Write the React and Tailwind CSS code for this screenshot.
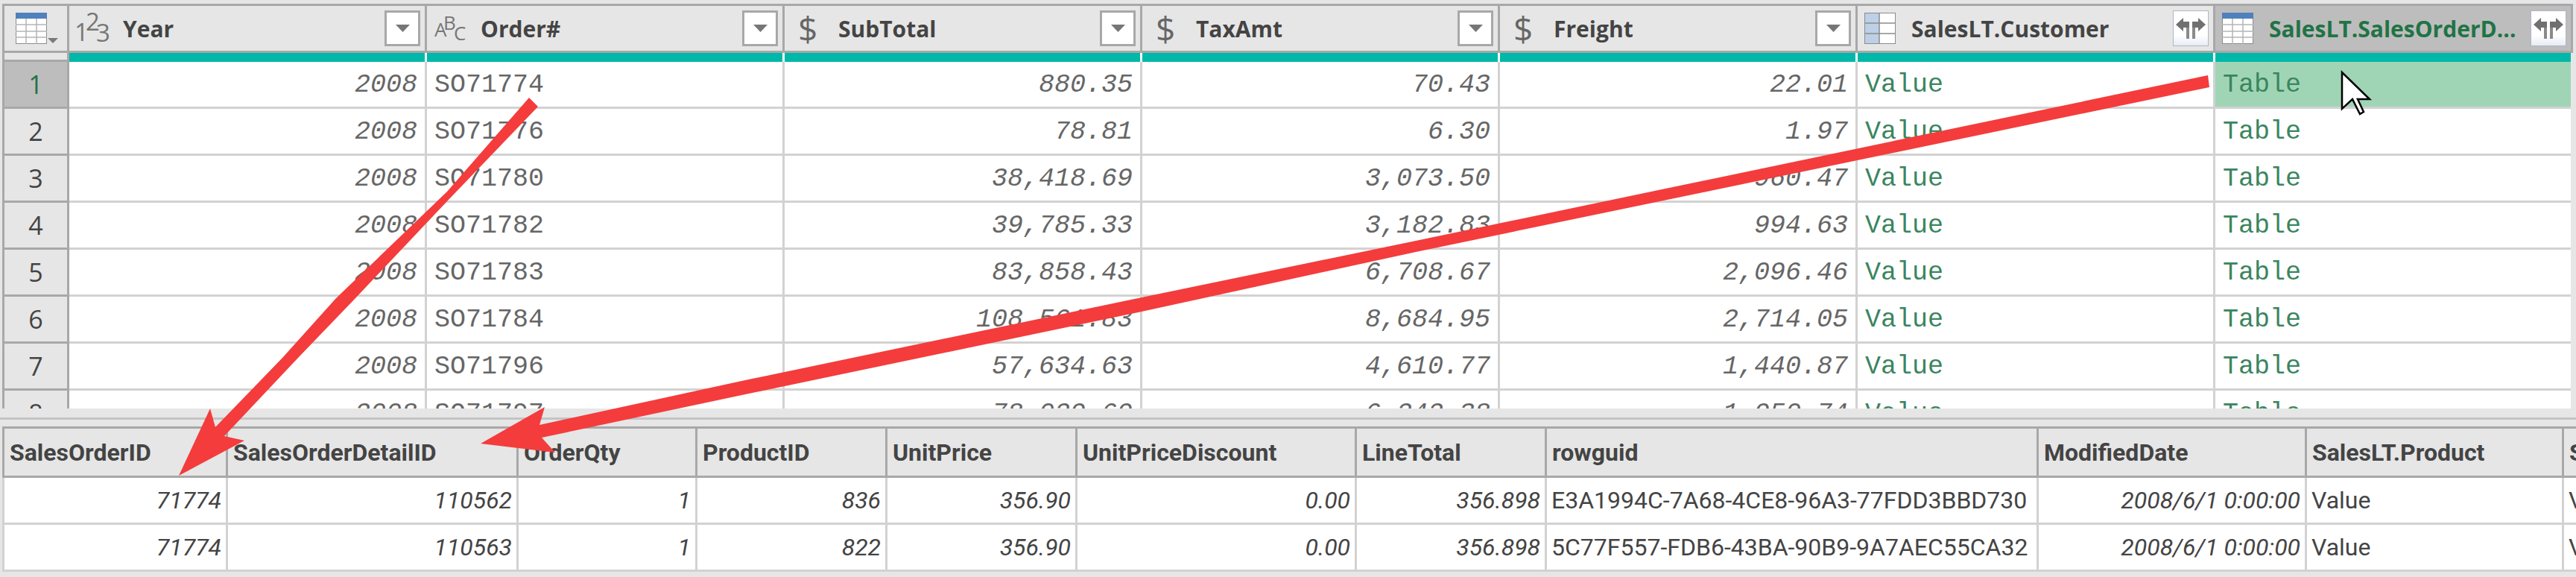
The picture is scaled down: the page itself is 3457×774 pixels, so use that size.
const rows = [
    ["2008", "SO71774", "880.35", "70.43", "22.01"],
    ["2008", "SO71776", "78.81", "6.30", "1.97"],
    ["2008", "SO71780", "38,418.69", "3,073.50", "960.47"],
    ["2008", "SO71782", "39,785.33", "3,182.83", "994.63"],
    ["2008", "SO71783", "83,858.43", "6,708.67", "2,096.46"],
    ["2008", "SO71784", "108,561.83", "8,684.95", "2,714.05"],
    ["2008", "SO71796", "57,634.63", "4,610.77", "1,440.87"],
    ["2008", "SO71797", "78,029.69", "6,242.38", "1,950.74"],
];

const detailCols = [
    { name: "SalesOrderID", w: "w-[300px]" },
    { name: "SalesOrderDetailID", w: "w-[390px]" },
    { name: "OrderQty", w: "w-[240px]" },
    { name: "ProductID", w: "w-[255px]" },
    { name: "UnitPrice", w: "w-[255px]" },
    { name: "UnitPriceDiscount", w: "w-[375px]" },
    { name: "LineTotal", w: "w-[255px]" },
    { name: "rowguid", w: "w-[660px]" },
    { name: "ModifiedDate", w: "w-[360px]" },
    { name: "SalesLT.Product", w: "w-[345px]" },
    { name: "SalesLT.SalesOrderHeader", w: "w-[200px]" },
];

const detailRows = [
    ["71774", "110562", "1", "836", "356.90", "0.00", "356.898", "E3A1994C-7A68-4CE8-96A3-77FDD3BBD730", "2008/6/1 0:00:00", "Value", "Value"],
    ["71774", "110563", "1", "822", "356.90", "0.00", "356.898", "5C77F557-FDB6-43BA-90B9-9A7AEC55CA32", "2008/6/1 0:00:00", "Value", "Value"],
];

const TableIcon = ({ firstCol }) => (
    <svg width="42" height="42" viewBox="0 0 42 42" className="shrink-0">
        <rect x="0.5" y="0.5" width="41" height="41" fill="#fff" stroke="#8c8c8c" />
        {firstCol ? (
            <rect x="1" y="1" width="19" height="40" fill="#bdd0e6" />
        ) : (
            <rect x="0" y="0" width="42" height="8" fill="#4f81bd" />
        )}
        {firstCol ? (
            <path d="M20 0V42M0 14H42M0 28H42" stroke="#8c8c8c" strokeWidth="1.5" fill="none" />
        ) : (
            <path d="M14 8V42M28 8V42M0 16H42M0 25H42M0 33H42" stroke="#b5b5b5" strokeWidth="1.5" fill="none" />
        )}
    </svg>
);

const CornerIcon = () => (
    <div className="flex items-end gap-px">
        <TableIcon />
        <svg width="14" height="7" viewBox="0 0 14 7" className="mb-[1px]">
            <path d="M0 0H14L7 7Z" fill="#7a7a7a" />
        </svg>
    </div>
);

const FilterButton = () => (
    <div className="w-12 h-12 shrink-0 border-[3px] border-[#a8a8a8] bg-white flex items-center justify-center">
        <svg width="19" height="10" viewBox="0 0 19 10">
            <path d="M0 0H19L9.5 10Z" fill="#767676" />
        </svg>
    </div>
);

const ExpandButton = () => (
    <div className="w-12 h-12 shrink-0 border border-[#aeb6c4] bg-gradient-to-b from-white from-70% to-[#e8ecf4] flex items-center justify-center">
        <svg width="40" height="28" viewBox="0 0 40 28">
            <path d="M0 9L10 0V5H18V13H10V18Z" fill="#707070" />
            <path d="M40 9L30 0V5H22V13H30V18Z" fill="#707070" />
            <path d="M14 13H18V28H14ZM22 13H26V28H22Z" fill="#8a8a8a" />
        </svg>
    </div>
);

const NumberType = () => (
    <div className="w-[50px] h-[42px] relative shrink-0 text-[#777] text-[33px] leading-none font-['Open_Sans',sans-serif]">
        <span className="absolute left-[-2px] top-[9px]">1</span>
        <span className="absolute left-[13px] top-[-5px]">2</span>
        <span className="absolute left-[27px] top-[10px]">3</span>
    </div>
);

const TextType = () => (
    <div className="w-[50px] h-[42px] relative shrink-0 text-[#777] text-[26px] leading-none font-['Open_Sans',sans-serif]">
        <span className="absolute left-[1px] top-[9px]">A</span>
        <span className="absolute left-[13px] top-0">B</span>
        <span className="absolute left-[27px] top-[14px]">C</span>
    </div>
);

const CurrencyType = () => (
    <div className="w-[50px] shrink-0 pl-[9px] text-[#666] text-[46px] leading-none font-['Open_Sans',sans-serif]">$</div>
);

const HeaderCell = ({ icon, label, button, active }) => (
    <div
        className={`w-[477px] h-full flex items-center pl-[9px] pr-[6px] ${
            active ? "bg-[#bdbdbd] text-[#217346]" : "bg-[#e6e6e6] text-[#444]"
        }`}
    >
        <div className="w-[50px] shrink-0">{icon}</div>
        <span className="ml-[13px] flex-1 text-[30px] font-bold font-['Open_Sans',sans-serif] whitespace-nowrap">
            {label}
        </span>
        {button}
    </div>
);

const BodyCell = ({ children, right, green, selected }) => (
    <div
        className={`w-[477px] h-full flex items-center px-[10px] pt-[2px] text-[35px] leading-none font-['Liberation_Mono',monospace] whitespace-nowrap ${
            right ? "justify-end italic" : ""
        } ${green ? "text-[#3b8560]" : "text-[#666]"} ${selected ? "bg-[#9fd5b5]" : "bg-white"}`}
    >
        {children}
    </div>
);

const VSep = ({ dark }) => (
    <div className={`w-[3px] h-full shrink-0 ${dark ? "bg-[#a8a8a8]" : "bg-[#d2d2d2]"}`} />
);

const QueryGrid = () => (
    <div className="h-[543px] overflow-hidden pl-[3px] shrink-0">
        {/* Encabezados */}
        <div className="w-[3450px] flex h-[66px] border-y-[3px] border-[#a8a8a8] border-x-[3px] box-border">
            <div className="w-[84px] h-full bg-[#e6e6e6] flex items-center pl-[15px]">
                <CornerIcon />
            </div>
            <VSep dark />
            <HeaderCell icon={<NumberType />} label="Year" button={<FilterButton />} />
            <VSep dark />
            <HeaderCell icon={<TextType />} label="Order#" button={<FilterButton />} />
            <VSep dark />
            <HeaderCell icon={<CurrencyType />} label="SubTotal" button={<FilterButton />} />
            <VSep dark />
            <HeaderCell icon={<CurrencyType />} label="TaxAmt" button={<FilterButton />} />
            <VSep dark />
            <HeaderCell icon={<CurrencyType />} label="Freight" button={<FilterButton />} />
            <VSep dark />
            <HeaderCell icon={<TableIcon firstCol />} label="SalesLT.Customer" button={<ExpandButton />} />
            <VSep dark />
            <HeaderCell icon={<TableIcon />} label="SalesLT.SalesOrderD..." button={<ExpandButton />} active />
        </div>

        {/* Barra de calidad de columnas */}
        <div className="flex h-[12px] w-[3447px]">
            <div className="w-[3px] bg-[#a8a8a8]" />
            <div className="w-[84px] h-full flex flex-col bg-[#e6e6e6]">
                <div className="h-[9px]" />
                <div className="h-[3px] bg-[#a8a8a8]" />
            </div>
            <VSep dark />
            {[0, 1, 2, 3, 4, 5, 6].map((i) => (
                <div key={i} className="flex h-full">
                    {i > 0 && <div className="w-[3px] bg-white" />}
                    <div className="w-[477px] bg-[#00b8aa]" />
                </div>
            ))}
        </div>

        {rows.map((row, i) => (
            <div key={i} className="flex h-[63px] w-[3447px] bg-[#d2d2d2]">
                <div className="w-[3px] bg-[#a8a8a8]" />
                <div className="w-[84px] h-full flex flex-col">
                    <div
                        className={`h-[60px] flex items-center justify-center text-[34px] font-['Open_Sans',sans-serif] ${
                            i === 0 ? "bg-[#bdbdbd] text-[#217346]" : "bg-[#e6e6e6] text-[#444]"
                        }`}
                    >
                        {i + 1}
                    </div>
                    <div className="h-[3px] bg-[#a8a8a8]" />
                </div>
                <VSep dark />
                <div className="flex flex-col">
                    <div className="flex h-[60px]">
                        <BodyCell right>{row[0]}</BodyCell>
                        <VSep />
                        <BodyCell>{row[1]}</BodyCell>
                        <VSep />
                        <BodyCell right>{row[2]}</BodyCell>
                        <VSep />
                        <BodyCell right>{row[3]}</BodyCell>
                        <VSep />
                        <BodyCell right>{row[4]}</BodyCell>
                        <VSep />
                        <BodyCell green>Value</BodyCell>
                        <VSep />
                        <BodyCell green selected={i === 0}>Table</BodyCell>
                    </div>
                </div>
            </div>
        ))}
    </div>
);

const DetailGrid = () => (
    <div className="flex-1 overflow-hidden bg-[#e6e6e6]">
        <div className="h-[12px]" />
        <div className="h-[3px] bg-[#c4c4c4]" />
        <div className="h-[9px]" />
        <div className="pl-[3px] w-[3800px]">
            <div className="flex h-[69px] border-y-[3px] border-[#a8a8a8] box-border bg-[#e6e6e6]">
                <div className="w-[3px] bg-[#a8a8a8]" />
                {detailCols.map((col) => (
                    <div
                        key={col.name}
                        className={`${col.w} shrink-0 h-full flex items-center pl-[7px] border-r-[3px] border-[#a8a8a8] box-border text-[32px] font-bold font-['Roboto',sans-serif] text-[#444] whitespace-nowrap overflow-hidden`}
                    >
                        {col.name}
                    </div>
                ))}
            </div>
            {detailRows.map((row, i) => (
                <div key={i} className="flex h-[63px] border-b-[3px] border-[#d2d2d2] box-border bg-white">
                    <div className="w-[3px] bg-[#d2d2d2]" />
                    {detailCols.map((col, j) => (
                        <div
                            key={col.name}
                            className={`${col.w} shrink-0 h-full flex items-center px-[6px] border-r-[3px] border-[#d2d2d2] box-border text-[32px] font-['Roboto',sans-serif] text-[#444] whitespace-nowrap ${
                                j === 7 || j >= 9 ? "" : "justify-end italic"
                            }`}
                        >
                            <span className="min-w-0 overflow-hidden">{row[j]}</span>
                        </div>
                    ))}
                </div>
            ))}
        </div>
    </div>
);

// Flechas y cursor dibujados encima de las dos tablas
const Overlay = () => (
    <svg width="3457" height="774" viewBox="0 0 3457 774" className="absolute left-0 top-0 pointer-events-none">
        <polygon
            points="710,131 722,143 600,270 477,400 400,480 301,585 328,591 240,638 282,548 289,573 379,480 451,400 600,257"
            fill="#f43c3c"
        />
        <polygon
            points="2963,101 2965,117 1900,338 1532,418 1000,529 727,587 745,607 645,595 731,546 724,570 1000,510 1532,399 1900,323"
            fill="#f43c3c"
        />
        <polygon
            points="3143,97 3143,146 3157,133 3167,153 3172,150 3164,133 3180,133"
            fill="#fff"
            stroke="#000"
            strokeWidth="2.5"
        />
    </svg>
);

const App = () => {
    return (
        <div className="relative w-[3457px] h-[774px] overflow-hidden bg-[#e6e6e6] flex flex-col pt-[5px]">
            <QueryGrid />
            <DetailGrid />
            <Overlay />
        </div>
    );
};

export default App;
